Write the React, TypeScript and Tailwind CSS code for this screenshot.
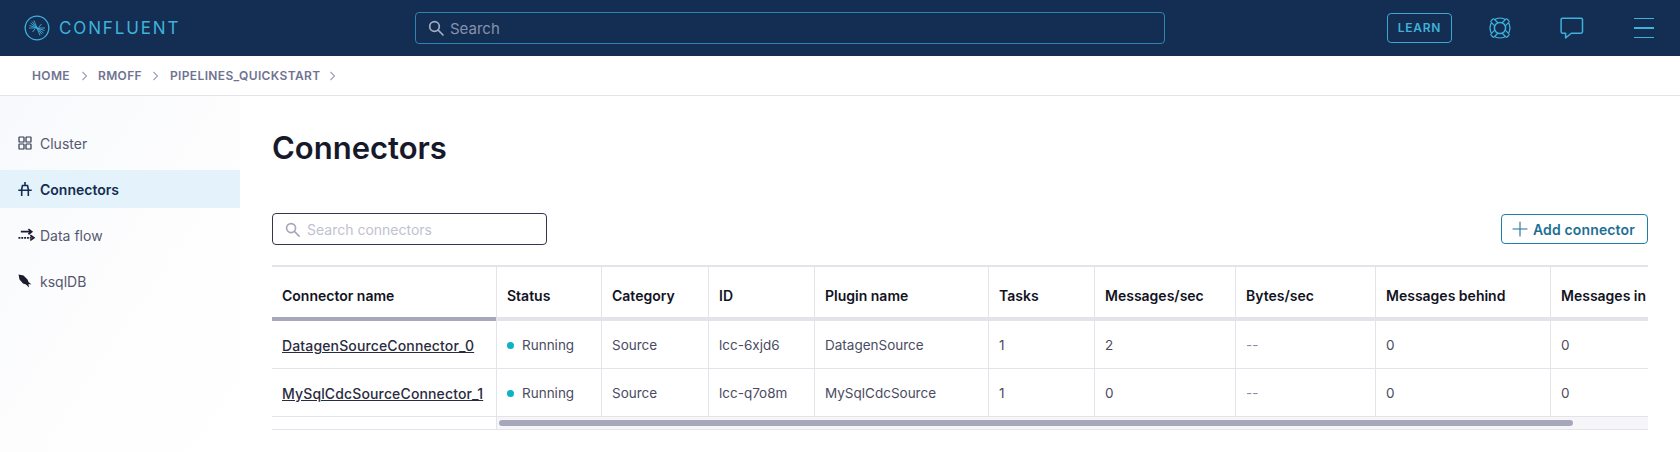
import React from 'react';
import { Plus } from 'lucide-react';

const columns = [
  { label: 'Connector name', width: 'w-[224px]' },
  { label: 'Status', width: 'w-[105px]' },
  { label: 'Category', width: 'w-[107px]' },
  { label: 'ID', width: 'w-[106px]' },
  { label: 'Plugin name', width: 'w-[174px]' },
  { label: 'Tasks', width: 'w-[106px]' },
  { label: 'Messages/sec', width: 'w-[141px]' },
  { label: 'Bytes/sec', width: 'w-[140px]' },
  { label: 'Messages behind', width: 'w-[175px]' },
  { label: 'Messages in', width: 'w-[98px]' },
];

const rows = [
  ['DatagenSourceConnector_0', 'Running', 'Source', 'lcc-6xjd6', 'DatagenSource', '1', '2', '--', '0', '0'],
  ['MySqlCdcSourceConnector_1', 'Running', 'Source', 'lcc-q7o8m', 'MySqlCdcSource', '1', '0', '--', '0', '0'],
];

const SearchIcon = ({ className }: { className: string }) => (
  <svg viewBox="0 0 16 16" fill="none" stroke="currentColor" strokeWidth="1.7" className={className}>
    <circle cx="6.5" cy="6.5" r="4.8" />
    <path d="M10 10l5 5" strokeLinecap="round" />
  </svg>
);

const Logo = () => (
  <svg viewBox="0 0 26 26" fill="none" stroke="#3fb2da" className="w-[26px] h-[26px]">
    <circle cx="13" cy="13" r="11.8" strokeWidth="1.3" />
    <path
      d="M13 13L8 6.500M13 13L10 5.500M13 13L6.500 8M13 13L5.500 10.500M13 13L5 13M13 13L18 19.500M13 13L16 20.500M13 13L19.500 18M13 13L20.500 15.500M13 13L21 13M11 14L8.500 17M15 12L17.500 9"
      strokeWidth="0.9"
    />
  </svg>
);

const Lifebuoy = () => (
  <svg viewBox="0 0 24 24" fill="none" stroke="#3fb2da" strokeWidth="1.2" className="w-6 h-6">
    <circle cx="12" cy="12" r="10" />
    {[45, 135, 225, 315].map((deg) => (
      <rect key={deg} x="9.800" y="0.600" width="4.400" height="7" rx="1.200" fill="#142d53" transform={`rotate(${deg} 12 12)`} />
    ))}
    <circle cx="12" cy="12" r="5.600" fill="#142d53" strokeWidth="1.500" />
  </svg>
);

const Chat = () => (
  <svg viewBox="0 0 24 24" fill="none" stroke="#3fb2da" strokeWidth="1.5" strokeLinejoin="round" className="w-6 h-6">
    <path d="M2.500 2.200h18.600a1.400 1.400 0 0 1 1.400 1.400v12.200a1.400 1.400 0 0 1-1.400 1.400H11.300L5.600 22v-4.800H2.500a1.400 1.400 0 0 1-1.400-1.400V3.600a1.400 1.400 0 0 1 1.400-1.400z" />
  </svg>
);

const ClusterIcon = () => (
  <svg viewBox="0 0 14 14" fill="none" stroke="#33364d" strokeWidth="1.2" className="w-[14px] h-[14px]">
    <rect x="1" y="1" width="5" height="5" rx="0.6" />
    <rect x="8" y="1" width="5" height="5" rx="0.6" />
    <rect x="1" y="8" width="5" height="5" rx="0.6" />
    <rect x="8" y="8" width="5" height="5" rx="0.6" />
  </svg>
);

const ConnectorIcon = () => (
  <svg viewBox="0 0 14 14" fill="none" stroke="#132c52" strokeWidth="1.6" className="w-[14px] h-[14px]">
    <path d="M7 0v3M3.500 8L4.500 3.500h5L10.500 8M0.300 8.300h13.400M3.700 8.300V14M10.300 8.300V14" />
  </svg>
);

const FlowIcon = () => (
  <svg viewBox="0 0 18 14" fill="none" stroke="#1a1c2e" strokeWidth="1.8" className="w-[17px] h-[14px]">
    <path d="M3 3.500h11M11 0.800l3.500 2.700L11 6.200" />
    <path d="M0.500 10h14" strokeDasharray="2 1" />
    <path d="M13 7.300l3.800 2.700-3.800 2.700" />
  </svg>
);

const KsqlIcon = () => (
  <svg viewBox="0 0 14 14" className="w-[14px] h-[14px]">
    <path d="M0.500 0.500L5.500 1.500L9.500 5.500L10.500 8L13.500 10.500L10.500 10L11 13.500L8 10.500L5 9.500L1.500 5.500Z" fill="#1a1c2e" />
  </svg>
);

const Chevron = () => (
  <svg viewBox="0 0 8 10" fill="none" stroke="#a0a3b8" strokeWidth="1.2" className="w-2 h-[10px]">
    <path d="M1.500 1l4 4-4 4" />
  </svg>
);

const navItems = [
  { label: 'Cluster', icon: <ClusterIcon /> },
  { label: 'Connectors', icon: <ConnectorIcon />, active: true },
  { label: 'Data flow', icon: <FlowIcon /> },
  { label: 'ksqlDB', icon: <KsqlIcon /> },
];

export default function App() {
  return (
    <div className="w-[1680px] h-[452px] overflow-hidden bg-white font-['Inter',sans-serif] text-[14px]">
      <header className="h-14 bg-[#142d53] flex items-center">
        <div className="w-[415px] pl-6 flex items-center gap-[9px]">
          <Logo />
          <span className="text-[17px] pt-[2px] font-normal tracking-[0.11em] text-[#3fb2da]">CONFLUENT</span>
        </div>
        <div className="w-[750px] h-8 border border-[#2b86b2] rounded flex items-center pl-3 gap-[6px] text-[#8592ad]">
          <SearchIcon className="w-4 h-4 text-[#a3adc2]" />
          <span className="text-[15px] pt-[2px]">Search</span>
        </div>
        <div className="ml-[222px] w-[65px] h-[30px] border border-[#3aa8d0] rounded flex items-center justify-center text-[12px] font-semibold tracking-[0.06em] text-[#3fb2da]">
          LEARN
        </div>
        <div className="ml-[36px]"><Lifebuoy /></div>
        <div className="ml-[48px]"><Chat /></div>
        <div className="ml-[50px] w-5 flex flex-col gap-2">
          <div className="h-[1.5px] bg-[#3fb2da]" />
          <div className="h-[1.5px] bg-[#3fb2da]" />
          <div className="h-[1.5px] bg-[#3fb2da]" />
        </div>
      </header>

      <nav className="h-10 border-b border-[#e3e3ec] flex items-center pl-8 text-[12px] font-semibold tracking-[0.03em] text-[#6f7390]">
        <span>HOME</span>
        <span className="ml-[11px] mr-[9px]"><Chevron /></span>
        <span>RMOFF</span>
        <span className="ml-[10px] mr-[10px]"><Chevron /></span>
        <span>PIPELINES_QUICKSTART</span>
        <span className="ml-[9px]"><Chevron /></span>
      </nav>

      <div className="flex h-[356px]">
        <aside className="w-60 h-full pt-7 flex flex-col gap-2 bg-gradient-to-br from-[#f7f9fc] via-[#fdfdfe] to-white">
          {navItems.map((item) => (
            <div
              key={item.label}
              className={`h-[38px] flex items-center pl-[18px] ${item.active ? 'bg-[#e4f3fb] font-semibold text-[#132c52]' : 'text-[#55586f]'}`}
            >
              <span className="w-[22px] flex items-center">{item.icon}</span>
              <span>{item.label}</span>
            </div>
          ))}
        </aside>

        <main className="w-[1408px] pl-8">
          <h1 className="pt-[28px] h-[117px] text-[31px] leading-[48px] font-semibold text-[#17192b]">Connectors</h1>

          <div className="flex items-center justify-between w-[1376px] h-8">
            <div className="w-[275px] h-8 border border-[#33364d] rounded flex items-center pl-3 gap-[7px] text-[#c0c2d0]">
              <SearchIcon className="w-[15px] h-[15px] text-[#a5a7b8]" />
              <span className="pt-[1px]">Search connectors</span>
            </div>
            <button className="w-[147px] h-[30px] border border-[#1f7fa6] rounded flex items-center pl-[8px] font-semibold tracking-[0.01em] text-[#1c6f94] bg-white">
              <Plus size={24} strokeWidth={1.1} className="-ml-[2px] mr-[1px]" />
              <span className="pt-[1px]">Add connector</span>
            </button>
          </div>

          <div className="mt-5 w-[1376px] border-t-2 border-[#e3e3ec]">
            <div className="flex h-[50px]">
              {columns.map((col, i) => (
                <div
                  key={col.label}
                  className={`${col.width} shrink-0 flex items-center pl-[10px] pt-[6px] overflow-hidden whitespace-nowrap font-semibold text-[#12131f] ${i > 0 ? 'border-l border-[#e3e3ec]' : ''}`}
                >
                  {col.label}
                </div>
              ))}
            </div>
            <div className="flex h-1 bg-[#e3e3ec]">
              <div className="w-[224px] bg-[#a6a7ba]" />
            </div>
            {rows.map((row) => (
              <div key={row[0]} className="flex h-[48px] border-b border-[#e3e3ec] text-[13.5px] text-[#4a4c63]">
                {row.map((cell, i) => (
                  <div
                    key={i}
                    className={`${columns[i].width} shrink-0 flex items-center pl-[10px] pt-[2px] whitespace-nowrap ${i > 0 ? 'border-l border-[#e3e3ec]' : 'underline text-[14px] tracking-[0.01em] text-[#2a2c40] font-medium'} ${cell === '--' ? 'text-[#8c8ea2]' : ''}`}
                  >
                    {i === 1 && <span className="w-[7px] h-[7px] rounded-full bg-[#0fb1c6] mr-[8px]" />}
                    {cell}
                  </div>
                ))}
              </div>
            ))}
            <div className="flex h-[13px] border-b border-[#e3e3ec]">
              <div className="w-[224px] bg-white" />
              <div className="flex-1 border-l border-[#e3e3ec] bg-[#f6f6f9] pl-[2px] pt-[3px]">
                <div className="w-[1074px] h-[6px] rounded-full bg-[#a6a7ba]" />
              </div>
            </div>
          </div>
        </main>
      </div>
    </div>
  );
}
